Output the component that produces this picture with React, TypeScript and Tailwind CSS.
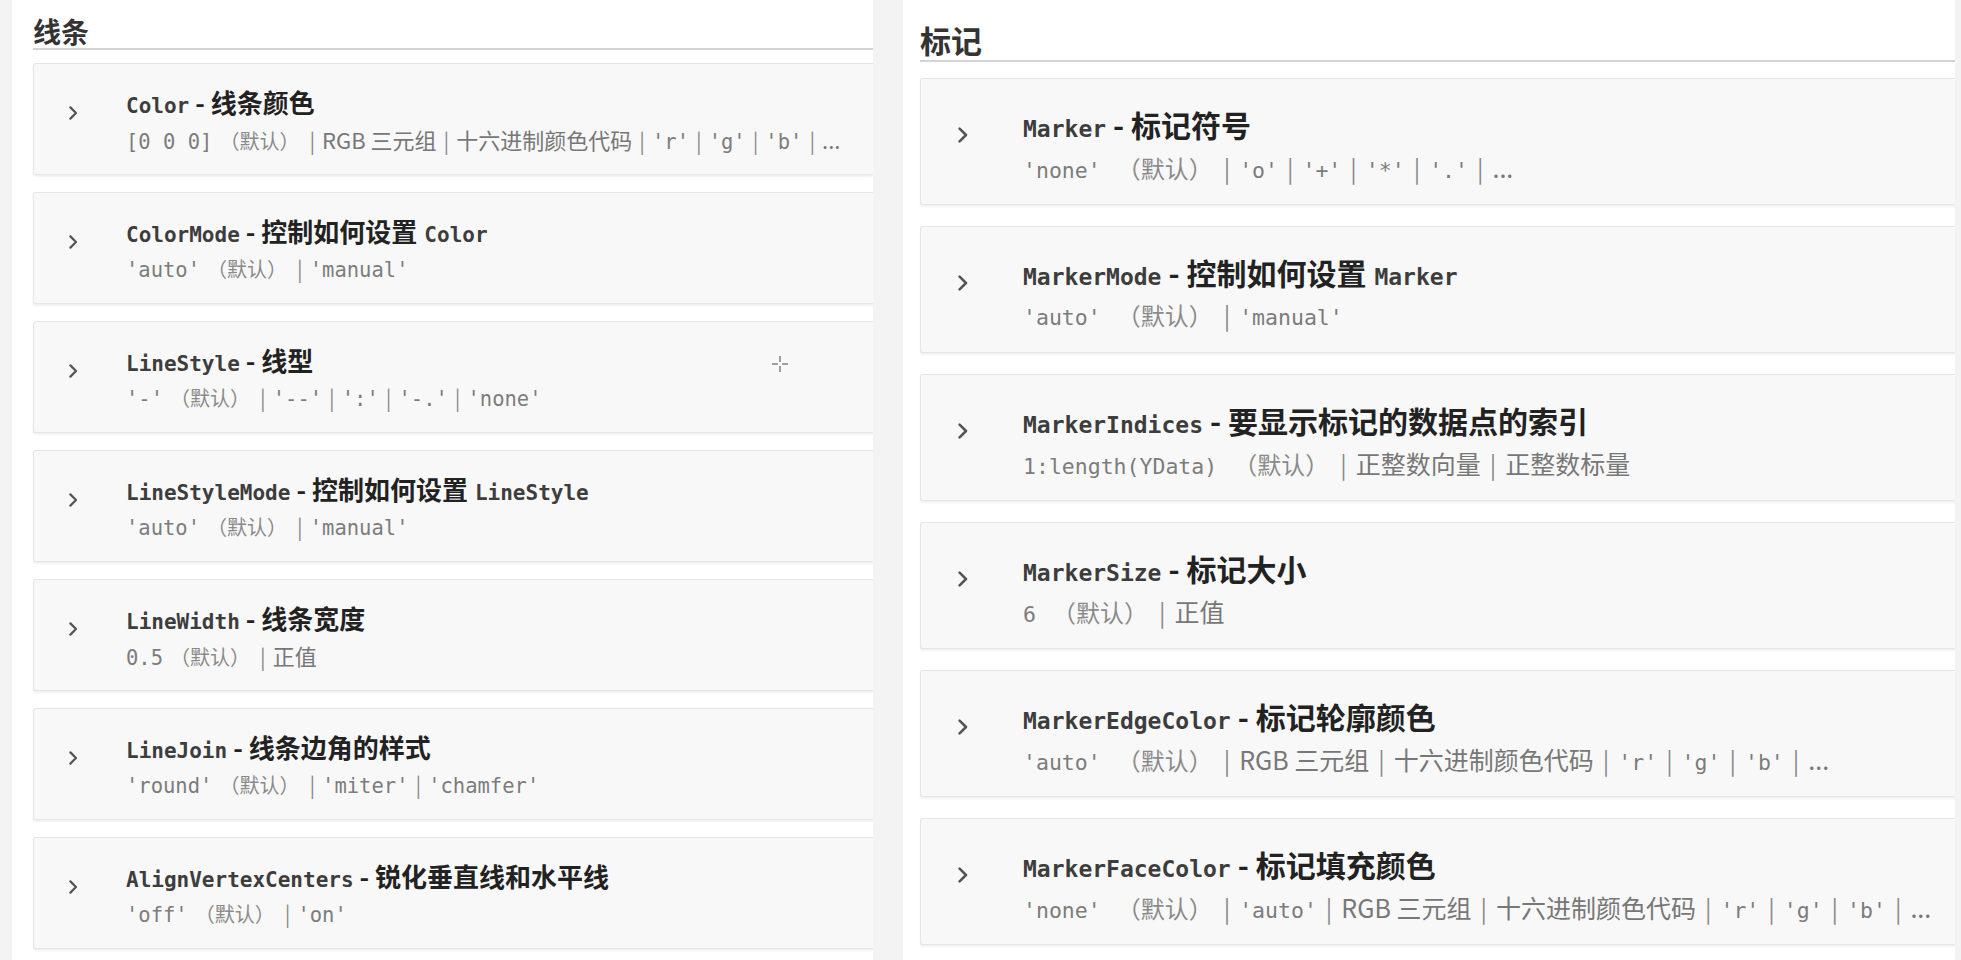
import type { ReactNode } from "react";

type Part = { t: string; k: "code" | "def" | "text" | "bar" };
type Prop = { name: string; desc: string; descCode?: string; values: Part[] };

const c = (t: string): Part => ({ t, k: "code" });
const s = (t: string): Part => ({ t, k: "text" });
const bar: Part = { t: "|", k: "bar" };
const def: Part = { t: "（默认）", k: "def" };

const lineProps: Prop[] = [
  {
    name: "Color",
    desc: "线条颜色",
    values: [c("[0 0 0]"), def, bar, s("RGB 三元组"), bar, s("十六进制颜色代码"), bar, c("'r'"), bar, c("'g'"), bar, c("'b'"), bar, s("...")],
  },
  { name: "ColorMode", desc: "控制如何设置", descCode: "Color", values: [c("'auto'"), def, bar, c("'manual'")] },
  {
    name: "LineStyle",
    desc: "线型",
    values: [c("'-'"), def, bar, c("'--'"), bar, c("':'"), bar, c("'-.'"), bar, c("'none'")],
  },
  { name: "LineStyleMode", desc: "控制如何设置", descCode: "LineStyle", values: [c("'auto'"), def, bar, c("'manual'")] },
  { name: "LineWidth", desc: "线条宽度", values: [c("0.5"), def, bar, s("正值")] },
  { name: "LineJoin", desc: "线条边角的样式", values: [c("'round'"), def, bar, c("'miter'"), bar, c("'chamfer'")] },
  { name: "AlignVertexCenters", desc: "锐化垂直线和水平线", values: [c("'off'"), def, bar, c("'on'")] },
];

const markerProps: Prop[] = [
  {
    name: "Marker",
    desc: "标记符号",
    values: [c("'none'"), def, bar, c("'o'"), bar, c("'+'"), bar, c("'*'"), bar, c("'.'"), bar, s("...")],
  },
  { name: "MarkerMode", desc: "控制如何设置", descCode: "Marker", values: [c("'auto'"), def, bar, c("'manual'")] },
  {
    name: "MarkerIndices",
    desc: "要显示标记的数据点的索引",
    values: [c("1:length(YData)"), def, bar, s("正整数向量"), bar, s("正整数标量")],
  },
  { name: "MarkerSize", desc: "标记大小", values: [c("6"), def, bar, s("正值")] },
  {
    name: "MarkerEdgeColor",
    desc: "标记轮廓颜色",
    values: [c("'auto'"), def, bar, s("RGB 三元组"), bar, s("十六进制颜色代码"), bar, c("'r'"), bar, c("'g'"), bar, c("'b'"), bar, s("...")],
  },
  {
    name: "MarkerFaceColor",
    desc: "标记填充颜色",
    values: [
      c("'none'"), def, bar, c("'auto'"), bar, s("RGB 三元组"), bar, s("十六进制颜色代码"),
      bar, c("'r'"), bar, c("'g'"), bar, c("'b'"), bar, s("..."),
    ],
  },
];

const mono = "font-['DejaVu_Sans_Mono',monospace]";

type Sizes = {
  card: string;
  chevron: number;
  chevronBox: string;
  line: string;
  name: string;
  desc: string;
  descCode: string;
  code: string;
  def: string;
  text: string;
  bar: string;
};

const left: Sizes = {
  card: "h-[112px] pl-[35px] pt-[25px]",
  chevron: 14,
  chevronBox: "w-[57px] pt-[17px]",
  line: "h-[34px]",
  name: "text-[21px]",
  desc: "text-[26px] ml-[6px]",
  descCode: "text-[21px] ml-[7px]",
  code: "text-[20.5px]",
  def: "text-[20px] ml-[7px] mr-[3px]",
  text: "text-[22px]",
  bar: "text-[21px] mx-[7px]",
};

const right: Sizes = {
  card: "h-[127px] pl-[37px] pt-[29px]",
  chevron: 16,
  chevronBox: "w-[65px] pt-[19px]",
  line: "h-[40px]",
  name: "text-[23px]",
  desc: "text-[30px] ml-[7px]",
  descCode: "text-[23px] ml-[8px]",
  code: "text-[21.5px]",
  def: "text-[24px] ml-[16px] mr-[2px]",
  text: "text-[25px]",
  bar: "text-[24px] mx-[9px]",
};

const Chevron = ({ size }: { size: number }) => (
  <svg width={size * 0.6} height={size} viewBox="0 0 6 10" fill="none">
    <path d="M1 1l4 4-4 4" stroke="#555" strokeWidth="1.6" strokeLinecap="round" strokeLinejoin="round" />
  </svg>
);

const Values = ({ parts, z }: { parts: Part[]; z: Sizes }) => (
  <span className="whitespace-nowrap [text-spacing-trim:space-all]">
    {parts.map((p, i) => {
      if (p.k === "code")
        return (
          <span key={i} className={`${mono} ${z.code} text-[#7c7c7c]`}>
            {p.t}
          </span>
        );
      if (p.k === "def")
        return (
          <span key={i} className={`${z.def} text-[#8a8a8a]`}>
            {p.t}
          </span>
        );
      if (p.k === "bar")
        return (
          <span key={i} className={`${z.bar} text-[#8a8a8a]`}>
            {p.t}
          </span>
        );
      return (
        <span key={i} className={`${z.text} text-[#777]`}>
          {p.t}
        </span>
      );
    })}
  </span>
);

const Card = ({ p, z }: { p: Prop; z: Sizes }) => (
  <div
    className={`flex shrink-0 rounded-l-[3px] border border-r-0 border-[#e6e6e6] bg-[#f8f8f8] shadow-[0_2px_2px_rgba(0,0,0,0.06)] ${z.card}`}
  >
    <div className={z.chevronBox}>
      <Chevron size={z.chevron} />
    </div>
    <div className="flex flex-col">
      <div className={`flex items-center pb-[7px] ${z.line}`}>
        <span className="whitespace-nowrap">
          <span className={`${mono} ${z.name} font-semibold text-[#3d3d3d]`}>{p.name}</span>
          <span className={`${z.desc} font-bold text-[#222]`}>- {p.desc}</span>
          {p.descCode && <span className={`${mono} ${z.descCode} font-semibold text-[#3d3d3d]`}>{p.descCode}</span>}
        </span>
      </div>
      <div className={`flex items-center ${z.line}`}>
        <Values parts={p.values} z={z} />
      </div>
    </div>
  </div>
);

const Section = ({ title, children, cls }: { title: string; children: ReactNode; cls: string }) => (
  <div className={cls}>
    <h2>{title}</h2>
    {children}
  </div>
);

export default function App() {
  return (
    <div className="relative flex h-[960px] w-[1961px] overflow-hidden bg-[#f3f3f3] font-['Noto_Sans_CJK_SC','Noto_Sans',sans-serif]">
      <Section
        title="线条"
        cls="ml-[12px] w-[861px] overflow-hidden bg-white pl-[21px] pt-[13px] [&>h2]:h-[37px] [&>h2]:leading-[36px] [&>h2]:text-[28px] [&>h2]:font-bold [&>h2]:text-[#333] [&>h2]:border-b-2 [&>h2]:border-[#d4d4d4] [&>h2]:mb-[13px]"
      >
        <div className="flex flex-col gap-[17px]">
          {lineProps.map((p) => (
            <Card key={p.name} p={p} z={left} />
          ))}
        </div>
      </Section>

      <Section
        title="标记"
        cls="ml-[30px] mr-[6px] flex-1 overflow-hidden bg-white pl-[17px] pt-[20px] [&>h2]:h-[42px] [&>h2]:leading-[40px] [&>h2]:text-[31px] [&>h2]:font-bold [&>h2]:text-[#333] [&>h2]:border-b-2 [&>h2]:border-[#d4d4d4] [&>h2]:mb-[16px]"
      >
        <div className="flex flex-col gap-[21px]">
          {markerProps.map((p) => (
            <Card key={p.name} p={p} z={right} />
          ))}
        </div>
      </Section>

      {/* mouse cursor captured in the screenshot */}
      <svg className="absolute left-[771px] top-[355px]" width="18" height="18" viewBox="0 0 18 18">
        <path d="M9 1v6M9 11v6M1 9h6M11 9h6" stroke="#444" strokeWidth="1" />
      </svg>
    </div>
  );
}
